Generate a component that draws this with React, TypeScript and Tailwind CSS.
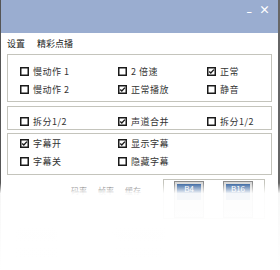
import React from 'react';

type Item = { label: string; checked?: boolean };

const Box: React.FC<{ checked?: boolean }> = ({ checked }) => (
  <svg width="9" height="9" viewBox="0 0 9 9" className="shrink-0">
    <rect x="0.75" y="0.75" width="7.5" height="7.5" fill="#fff" stroke="#1a1a1a" strokeWidth="1.5" />
    {checked && <path d="M2.2 4.4 L3.8 6 L6.9 2.6" fill="none" stroke="#1a1a1a" strokeWidth="1.4" />}
  </svg>
);

const Check: React.FC<Item> = ({ label, checked }) => (
  <div className="flex h-[12px] items-center gap-[4px]">
    <Box checked={checked} />
    <span className="text-[9px] leading-none tracking-[0.5px] text-[#333]">{label}</span>
  </div>
);

const Group: React.FC<{ rows: Item[][]; className: string }> = ({ rows, className }) => (
  <div className={`mx-[6px] border border-[#c4c4bc] shadow-[inset_1px_1px_0_#fff] ${className}`}>
    <div className="flex flex-col gap-[6px]">
      {rows.map((row, i) => (
        <div key={i} className="grid grid-cols-[98px_89px_1fr] pl-[12px]">
          {row.map((it, j) => (
            <Check key={j} {...it} />
          ))}
        </div>
      ))}
    </div>
  </div>
);

const speed: Item[][] = [
  [{ label: '慢动作 1' }, { label: '2 倍速' }, { label: '正常', checked: true }],
  [{ label: '慢动作 2' }, { label: '正常播放', checked: true }, { label: '静音' }],
];
const audio: Item[][] = [[{ label: '拆分1/2' }, { label: '声道合并', checked: true }, { label: '拆分1/2' }]];
const subs: Item[][] = [
  [{ label: '字幕开', checked: true }, { label: '显示字幕', checked: true }],
  [{ label: '字幕关' }, { label: '隐藏字幕' }],
];

const BlueButton: React.FC<{ label: string }> = ({ label }) => (
  <div className="w-[30px] border border-[#8c8c8c] bg-[#d8d8d8] p-[2px]">
    <div className="flex h-[16px] items-start justify-center bg-[#2f5e9c] pt-[1px] text-[8px] leading-none text-white">
      {label}
    </div>
  </div>
);

export default function App() {
  return (
    <div
      className="relative h-[270px] w-[280px] overflow-hidden bg-white"
      style={{ fontFamily: '"Noto Sans CJK SC", "Noto Sans", sans-serif' }}
    >
      <div className="border-l border-r-2 border-[#555] border-r-[#666] pb-[40px]">
        <div className="flex h-[33px] items-start justify-end gap-[7px] bg-[#9aadd0] pr-[8px] pt-[4px] text-white">
          <span className="mt-[2px] text-[10px] font-bold leading-none">–</span>
          <span className="text-[11px] font-bold leading-none">×</span>
        </div>
        <div className="flex h-[21px] items-center gap-[12px] pl-[6px] text-[9px] leading-none text-[#222]">
          <span>设置</span>
          <span>精彩点播</span>
        </div>
        <Group rows={speed} className="h-[48px] pt-[10px]" />
        <Group rows={audio} className="mt-[4px] h-[24px] pt-[8px]" />
        <Group rows={subs} className="mt-[3px] h-[42px] pt-[3px]" />
        <div className="mt-[4px] flex">
          <div className="flex w-[162px] gap-[11px] pl-[70px] pt-[8px] text-[8px] leading-none text-[#444]">
            <span>码率</span>
            <span>帧率</span>
            <span>缓存</span>
          </div>
          <div className="flex h-[40px] w-[102px] gap-[19px] border border-[#c4c4bc] pl-[10px] pt-[1px]">
            <BlueButton label="B4" />
            <BlueButton label="B16" />
          </div>
        </div>
        <div className="mt-[12px] flex flex-col gap-[10px] pl-[17px] blur-[2px]">
          <div className="flex gap-[60px]">
            <div className="h-[8px] w-[38px] bg-[#ececec]" />
            <div className="h-[8px] w-[48px] bg-[#ececec]" />
          </div>
          <div className="flex gap-[60px]">
            <div className="h-[8px] w-[38px] bg-[#ececec]" />
            <div className="h-[8px] w-[48px] bg-[#ececec]" />
          </div>
        </div>
      </div>
      <div className="absolute inset-x-0 top-[183px] bottom-0 bg-gradient-to-b from-white/0 via-white/95 via-[12%] to-white" />
    </div>
  );
}
